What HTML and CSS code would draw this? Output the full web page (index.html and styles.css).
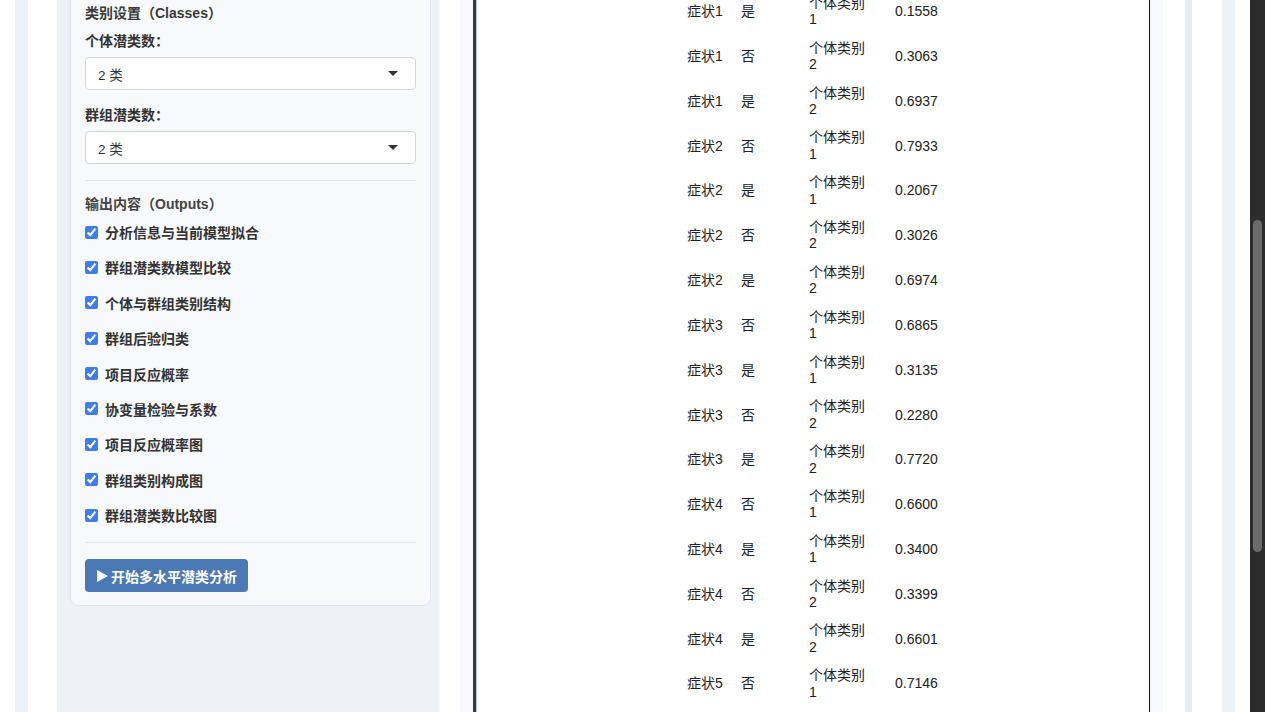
FILE: index.html
```html
<!DOCTYPE html>
<html lang="zh-CN">
<head>
  <meta charset="UTF-8">
  <meta name="viewport" content="width=device-width, initial-scale=1.0">
  <title>多水平潜类分析</title>
  <link rel="stylesheet" href="styles.css">
</head>
<body>
  <div class="shell">

    <!-- Sidebar: settings -->
    <aside class="sidebar">
      <div class="card">
        <h4 class="section-title">类别设置（Classes）</h4>

        <label class="field-label">个体潜类数：</label>
        <div class="select"><span>2 类</span><i class="caret"></i></div>

        <label class="field-label second">群组潜类数：</label>
        <div class="select"><span>2 类</span><i class="caret"></i></div>

        <hr>

        <h4 class="section-title light">输出内容（Outputs）</h4>
        <div class="checks">
          <label class="check"><input type="checkbox" checked> 分析信息与当前模型拟合</label>
          <label class="check"><input type="checkbox" checked> 群组潜类数模型比较</label>
          <label class="check"><input type="checkbox" checked> 个体与群组类别结构</label>
          <label class="check"><input type="checkbox" checked> 群组后验归类</label>
          <label class="check"><input type="checkbox" checked> 项目反应概率</label>
          <label class="check"><input type="checkbox" checked> 协变量检验与系数</label>
          <label class="check"><input type="checkbox" checked> 项目反应概率图</label>
          <label class="check"><input type="checkbox" checked> 群组类别构成图</label>
          <label class="check"><input type="checkbox" checked> 群组潜类数比较图</label>
        </div>

        <hr class="bottom-rule">

        <button class="run-btn" type="button">
          <svg width="11" height="12" viewBox="0 0 11 12"><path d="M0 0 L11 6 L0 12 Z" fill="#fff"/></svg>
          开始多水平潜类分析
        </button>
      </div>
    </aside>

    <!-- Main output panel -->
    <main class="main">
      <div class="output-wrap">
        <div class="output-frame">
          <table class="prob-table">
            <colgroup>
              <col class="c-item"><col class="c-resp"><col class="c-class"><col class="c-prob">
            </colgroup>
            <tbody id="probRows"></tbody>
          </table>
        </div>
      </div>
    </main>
  </div>

  <div class="scrollbar"><div class="thumb"></div></div>

  <script>
    // item response probabilities: [item, response, class, prob]
    const rows = [
      ["症状1", "是", 1, "0.1558"],
      ["症状1", "否", 2, "0.3063"],
      ["症状1", "是", 2, "0.6937"],
      ["症状2", "否", 1, "0.7933"],
      ["症状2", "是", 1, "0.2067"],
      ["症状2", "否", 2, "0.3026"],
      ["症状2", "是", 2, "0.6974"],
      ["症状3", "否", 1, "0.6865"],
      ["症状3", "是", 1, "0.3135"],
      ["症状3", "否", 2, "0.2280"],
      ["症状3", "是", 2, "0.7720"],
      ["症状4", "否", 1, "0.6600"],
      ["症状4", "是", 1, "0.3400"],
      ["症状4", "否", 2, "0.3399"],
      ["症状4", "是", 2, "0.6601"],
      ["症状5", "否", 1, "0.7146"],
      ["症状5", "是", 1, "0.2854"],
      ["症状5", "否", 2, "0.3121"]
    ];

    const tbody = document.getElementById("probRows");
    rows.forEach(r => {
      const tr = document.createElement("tr");
      tr.innerHTML =
        "<td>" + r[0] + "</td>" +
        "<td>" + r[1] + "</td>" +
        "<td>个体类别 " + r[2] + "</td>" +
        "<td>" + r[3] + "</td>";
      tbody.appendChild(tr);
    });
  </script>
</body>
</html>
```

FILE: styles.css
```css
html, body {
  margin: 0;
  height: 100%;
  overflow: hidden;
}

body {
  background: #ffffff;
  color: #333;
  font-family: "Liberation Sans", "Noto Sans CJK SC", sans-serif;
  font-size: 14px;
  width: 1250px;
}

/* Page shell with light side rails */
.shell {
  display: flex;
  align-items: stretch;
  height: 100%;
  margin: 0 15px;
  border-left: 13px solid #eef1f6;
  border-right: 13px solid #eef1f6;
  padding: 0 30px 0 29px;
  background: #fff;
}

/* Sidebar */
.sidebar {
  width: 381px;
  flex-shrink: 0;
  background: #eef2f7;
  padding: 0 7px 0 13px;
  box-sizing: border-box;
}

.card {
  margin-top: -12px;
  background: #f8f9fb;
  border: 1px solid #e1e5eb;
  border-radius: 8px;
  padding: 14px 14px 13px;
}

.section-title {
  margin: 0;
  font-size: 14px;
  line-height: 20px;
  font-weight: 700;
  color: #3a3a3a;
}

.section-title.light {
  font-weight: 600;
  color: #444;
}

.field-label {
  display: block;
  margin-top: 8px;
  margin-bottom: 6px;
  font-weight: 700;
  line-height: 20px;
  color: #333;
}

.field-label.second {
  margin-top: 15px;
}

.select {
  height: 33px;
  box-sizing: border-box;
  background: #fff;
  border: 1px solid #d4d8de;
  border-radius: 4px;
  display: flex;
  align-items: center;
  justify-content: space-between;
  padding: 0 17px 0 12px;
  font-size: 13.5px;
  color: #333;
}

.caret {
  width: 0;
  height: 0;
  border-left: 5px solid transparent;
  border-right: 5px solid transparent;
  border-top: 5px solid #333;
}

hr {
  border: none;
  border-top: 1px solid #e3e6ea;
  margin: 16px 0 13px;
}

.bottom-rule {
  margin: 17px 0 16px;
}

/* Output checkboxes */
.checks {
  display: flex;
  flex-direction: column;
  gap: 15.4px;
  margin-top: 8px;
}

.check {
  display: flex;
  align-items: center;
  gap: 7px;
  height: 20px;
  font-weight: 700;
  color: #333;
}

.check input {
  width: 13px;
  height: 13px;
  margin: 0;
  accent-color: #3d7cf1;
}

.run-btn {
  display: flex;
  align-items: center;
  gap: 3px;
  height: 33px;
  padding: 0 11px 0 12px;
  background: #4a79b6;
  color: #fff;
  border: none;
  border-radius: 4px;
  font-family: inherit;
  font-size: 14px;
  font-weight: 600;
}

/* Main output area */
.main {
  flex: 1;
  display: flex;
  border-left: 2px solid #f3f5f9;
  border-right: 7px solid #e9ecf3;
  padding: 0 22px 0 20px;
}

.output-wrap {
  flex: 1;
  display: flex;
  flex-direction: column;
  background: #f8f9fc;
  padding: 0 13px;
}

.output-frame {
  flex: 1;
  margin-top: -11px;
  background: #fff;
  border-left: 3px solid #3a3c43;
  border-right: 1px solid #111;
  box-shadow: inset 1px 0 0 #b3bcd0;
}

.prob-table {
  table-layout: fixed;
  width: 251px;
  margin: 0 auto;
  border-collapse: collapse;
  color: #222;
  font-size: 14px;
}

.c-item { width: 54px; }
.c-resp { width: 68px; }
.c-class { width: 86px; }
.c-prob { width: 43px; }

.prob-table td {
  padding: 6px 0;
  line-height: 16.4px;
  height: 32.8px;
  vertical-align: middle;
  text-align: left;
  white-space: normal;
}

.prob-table td:nth-child(3) {
  padding-right: 26px;
}

.prob-table td:nth-child(4) {
  white-space: nowrap;
}

/* Dark scrollbar on the right edge */
.scrollbar {
  position: fixed;
  top: 0;
  right: 0;
  width: 15px;
  height: 100%;
  background: #2c2c2c;
}

.thumb {
  position: absolute;
  left: 3px;
  top: 220px;
  width: 9px;
  height: 332px;
  border-radius: 5px;
  background: #6b6b6b;
}
```
